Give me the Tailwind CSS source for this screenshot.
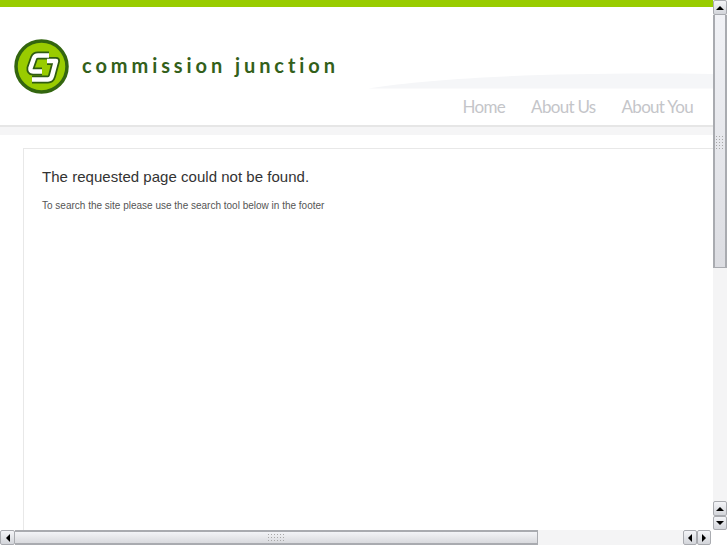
<!DOCTYPE html>
<html lang="en">
    <head>
        <meta charset="UTF-8" />
        <title>Commission Junction</title>
        <script src="https://cdn.jsdelivr.net/npm/@tailwindcss/browser@4"></script>
    </head>
    <body class="flex flex-col h-screen overflow-hidden bg-white font-['Liberation_Sans',sans-serif]">
        <div class="flex h-[530px]">
            <!-- page -->
            <div class="w-[713px] overflow-hidden">
                <div class="h-[7px] bg-[#99cc00]"></div>
                <header class="relative h-[118px] flex items-start border-b-0">
                    <svg class="absolute left-[360px] top-[60px]" width="353" height="24" viewBox="0 0 353 24">
                        <path d="M8 21.500C80 10 200 5 353 7V21.500Z" fill="#f5f6f8" />
                    </svg>
                    <svg class="ml-[14px] mt-[32px]" width="55" height="55" viewBox="0 0 55 55">
                        <circle cx="27.500" cy="27.500" r="25.500" fill="#99cc00" stroke="#33660f" stroke-width="3.500" />
                        <g fill="none" stroke-linejoin="round" stroke-linecap="butt">
                            <path d="M35 16.500H24Q21 16.500 20 19L16.500 29Q16 32.500 19 32.500H28" stroke="#2f5c10" stroke-width="8" />
                            <path d="M33 22H42L38 37Q37 40.500 34 40.500H18" stroke="#2f5c10" stroke-width="8" />
                            <path d="M35 16.500H24Q21 16.500 20 19L16.500 29Q16 32.500 19 32.500H28" stroke="#fff" stroke-width="4.500" />
                            <path d="M33 22H42L38 37Q37 40.500 34 40.500H18" stroke="#fff" stroke-width="4.500" />
                        </g>
                    </svg>
                    <div class="ml-[13px] mt-[44px] text-[20px] leading-[28px] font-bold tracking-[3.92px] text-[#33601a] font-['Lato',sans-serif] whitespace-nowrap">commission junction</div>
                    <nav class="absolute right-[20px] top-[88px] flex gap-[26px] text-[17px] leading-[24px] tracking-[-0.7px] text-[#c4c5c9] font-['Lato',sans-serif]">
                        <a>Home</a>
                        <a>About Us</a>
                        <a>About You</a>
                    </nav>
                </header>
                <div class="h-[10px] bg-[#f5f5f6] border-t-2 border-[#e6e6e6]"></div>
                <main class="ml-[23px] mt-[13px] h-[400px] border-l border-t border-[#e8e8e8] pl-[18px] pt-[18px]">
                    <h1 class="text-[15px] leading-[20px] tracking-[0.03px] text-[#333]">The requested page could not be found.</h1>
                    <p class="mt-[12px] text-[10px] leading-[14px] text-[#555]">To search the site please use the search tool below in the footer</p>
                </main>
            </div>
            <!-- vertical scrollbar -->
            <div class="w-[14px] flex flex-col bg-[#f4f4f5]">
                <div class="h-[15px] flex items-center justify-center border border-[#a9abb0] rounded-[2px] bg-gradient-to-b from-[#f4f5f8] to-[#d3d5da]">
                    <div class="w-0 h-0 border-x-[4px] border-x-transparent border-b-[4px] border-b-black"></div>
                </div>
                <div class="h-[253px] flex items-start justify-center pt-[120px] border-x-2 border-b border-[#a9abb0] bg-gradient-to-b from-[#f1f2f6] to-[#dcdde2]">
                    <div class="w-[10px] h-[15px] bg-[radial-gradient(#a8a8a8_1px,transparent_1px)] bg-[size:3px_3px]"></div>
                </div>
                <div class="flex-1 bg-[#f4f4f5]"></div>
                <div class="h-[15px] flex items-center justify-center border border-[#a9abb0] rounded-[2px] bg-gradient-to-b from-[#f4f5f8] to-[#d3d5da]">
                    <div class="w-0 h-0 border-x-[4px] border-x-transparent border-b-[4px] border-b-black"></div>
                </div>
                <div class="h-[14px] flex items-center justify-center border border-[#a9abb0] rounded-[2px] bg-gradient-to-b from-[#f4f5f8] to-[#d3d5da]">
                    <div class="w-0 h-0 border-x-[4px] border-x-transparent border-t-[4px] border-t-black"></div>
                </div>
            </div>
        </div>
        <!-- horizontal scrollbar -->
        <div class="h-[15px] flex">
            <div class="w-[15px] flex items-center justify-center border border-[#a9abb0] rounded-[2px] bg-gradient-to-b from-[#f4f5f8] to-[#d3d5da]">
                <div class="w-0 h-0 border-y-[4px] border-y-transparent border-r-[4px] border-r-black"></div>
            </div>
            <div class="w-[523px] flex items-center justify-center border-y-2 border-r border-[#a9abb0] bg-gradient-to-b from-[#f3f4f7] to-[#d9dade]">
                <div class="w-[18px] h-[10px] bg-[radial-gradient(#a8a8a8_1px,transparent_1px)] bg-[size:3px_3px]"></div>
            </div>
            <div class="w-[145px] bg-[#f4f4f5]"></div>
            <div class="w-[14px] flex items-center justify-center border border-[#a9abb0] rounded-[2px] bg-gradient-to-b from-[#f4f5f8] to-[#d3d5da]">
                <div class="w-0 h-0 border-y-[4px] border-y-transparent border-r-[4px] border-r-black"></div>
            </div>
            <div class="w-[14px] flex items-center justify-center border border-[#a9abb0] rounded-[2px] bg-gradient-to-b from-[#f4f5f8] to-[#d3d5da]">
                <div class="w-0 h-0 border-y-[4px] border-y-transparent border-l-[4px] border-l-black"></div>
            </div>
        </div>
    </body>
</html>
